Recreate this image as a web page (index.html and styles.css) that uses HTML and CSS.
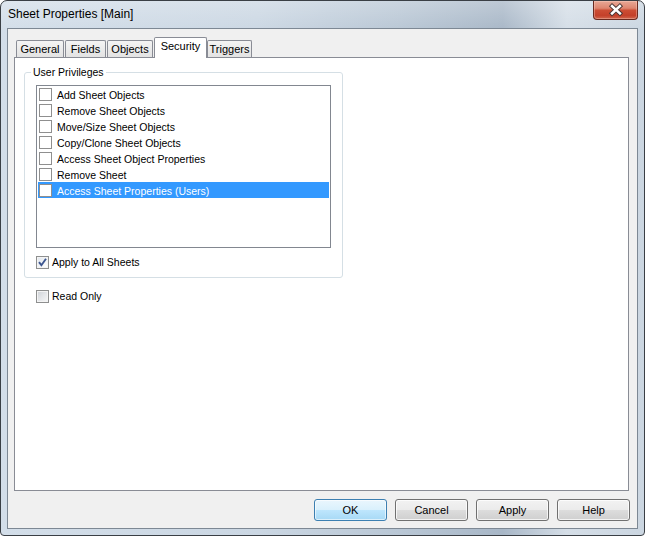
FILE: index.html
```html
<!DOCTYPE html>
<html>
<head>
<meta charset="utf-8">
<title>Sheet Properties [Main]</title>
<link rel="stylesheet" href="styles.css">
</head>
<body>
<div class="window">
  <div class="titlebar">
    <span class="title">Sheet Properties [Main]</span>
    <div class="close">
      <svg width="45" height="19" viewBox="0 0 45 19">
        <path d="M19.5 6 L27.5 13.5 M27.5 6 L19.5 13.5" stroke="#4a3533" stroke-width="4.6" stroke-linecap="square" fill="none"/>
        <path d="M19.5 6 L27.5 13.5 M27.5 6 L19.5 13.5" stroke="#ffffff" stroke-width="2.6" stroke-linecap="square" fill="none"/>
      </svg>
    </div>
  </div>
  <div class="client">
    <div class="tabstrip">
      <div class="tab t-general">General</div>
      <div class="tab t-fields">Fields</div>
      <div class="tab t-objects">Objects</div>
      <div class="tab t-security active">Security</div>
      <div class="tab t-triggers">Triggers</div>
    </div>
    <div class="panel">
      <div class="group">
        <span class="legend">User Privileges</span>
        <div class="list">
          <div class="row"><span class="lbox"></span><span class="rtext">Add Sheet Objects</span></div>
          <div class="row"><span class="lbox"></span><span class="rtext">Remove Sheet Objects</span></div>
          <div class="row"><span class="lbox"></span><span class="rtext">Move/Size Sheet Objects</span></div>
          <div class="row"><span class="lbox"></span><span class="rtext">Copy/Clone Sheet Objects</span></div>
          <div class="row"><span class="lbox"></span><span class="rtext">Access Sheet Object Properties</span></div>
          <div class="row"><span class="lbox"></span><span class="rtext">Remove Sheet</span></div>
          <div class="row selected"><span class="lbox"></span><span class="rtext">Access Sheet Properties (Users)</span></div>
        </div>
        <div class="check apply">
          <span class="cbox checked">
            <svg width="11" height="11" viewBox="0 0 11 11"><path d="M2 5.2 L4.4 8.2 L9 1.8" stroke="#3d5690" stroke-width="1.9" fill="none"/></svg>
          </span>
          <span class="ctext">Apply to All Sheets</span>
        </div>
      </div>
      <div class="check readonly">
        <span class="cbox"></span>
        <span class="ctext">Read Only</span>
      </div>
    </div>
    <div class="buttons">
      <button class="btn default">OK</button>
      <button class="btn">Cancel</button>
      <button class="btn">Apply</button>
      <button class="btn">Help</button>
    </div>
  </div>
</div>
</body>
</html>
```

FILE: styles.css
```css
* { box-sizing: border-box; }
html, body { margin: 0; padding: 0; }
body {
  width: 645px;
  height: 536px;
  overflow: hidden;
  font-family: "Liberation Sans", Arial, sans-serif;
  font-size: 10.5px;
  color: #000;
  background: #ffffff;
}
.window {
  width: 645px;
  height: 536px;
  border: 1px solid #3a3f45;
  border-radius: 7px 7px 4px 4px;
  background:
    linear-gradient(to bottom, rgba(255,255,255,0.25), rgba(255,255,255,0) 30px),
    linear-gradient(to right, #d3dee9 0%, #cbd7e3 40%, #b9c7d5 62%, #a8b7c7 78%, #d5dee7 88%, #cbd6e1 100%);
  display: flex;
  flex-direction: column;
  overflow: hidden;
}
.titlebar {
  height: 27px;
  flex: none;
  display: flex;
  justify-content: space-between;
  align-items: flex-start;
  padding-left: 7px;
}
.title {
  font-size: 12px;
  line-height: 26px;
  color: #000;
}
.close {
  width: 45px;
  height: 19px;
  margin-right: 6px;
  border: 1px solid #6a2a20;
  border-top: none;
  border-radius: 0 0 4px 4px;
  background: linear-gradient(to bottom, #e8a896 0%, #de8670 40%, #cc4d34 52%, #c4402a 80%, #d0664d 100%);
  box-shadow: inset 0 0 0 1px rgba(255, 220, 210, 0.35);
  display: flex;
}
.close svg { display: block; margin: -1px 0 0 -1px; }
.client {
  flex: 1;
  margin: 0 6px 6px 6px;
  border: 1px solid #7d8894;
  background: #f0f0f0;
  display: flex;
  flex-direction: column;
}
.tabstrip {
  height: 29px;
  flex: none;
  display: flex;
  align-items: flex-end;
  padding-left: 8px;
  margin-bottom: -1px;
  position: relative;
  z-index: 1;
}
.tab {
  height: 17px;
  margin-bottom: 1px;
  border: 1px solid #898c95;
  border-bottom: none;
  border-radius: 2px 2px 0 0;
  background: linear-gradient(to bottom, #f4f4f4 0%, #ebebeb 50%, #e3e3e3 100%);
  text-align: center;
  font-size: 11px;
  line-height: 16px;
  color: #000;
}
.t-general { width: 48px; margin-right: 1px; }
.t-fields { width: 41px; margin-right: 1px; }
.t-objects { width: 46px; margin-right: 1px; }
.t-security { width: 53px; }
.t-triggers { width: 45px; }
.tab.active {
  height: 21px;
  margin-bottom: 0;
  background: #ffffff;
  line-height: 17px;
}
.panel {
  height: 434px;
  flex: none;
  margin: 0 8px 0 6px;
  border: 1px solid #898c95;
  background: #ffffff;
  padding-top: 14px;
}
.group {
  position: relative;
  width: 319px;
  margin-left: 9px;
  border: 1px solid #d5dfe5;
  border-radius: 3px;
  padding: 12px 0 8px 11px;
}
.legend {
  position: absolute;
  top: -8px;
  left: 6px;
  padding: 0 2px;
  background: #ffffff;
  line-height: 14px;
}
.list {
  width: 295px;
  height: 163px;
  border: 1px solid #828790;
  padding: 0 1px;
  background: #ffffff;
}
.row {
  height: 16px;
  display: flex;
  align-items: flex-start;
}
.row.selected {
  background: #3399ff;
  color: #ffffff;
}
.lbox {
  width: 13px;
  height: 13px;
  margin: 2px 5px 0 1px;
  border: 1px solid #8f8f8f;
  background: #ffffff;
  flex: none;
}
.rtext { line-height: 16px; padding-top: 1px; }
.check {
  display: flex;
  align-items: center;
  height: 13px;
}
.apply { margin-top: 8px; }
.readonly { margin: 12px 0 0 21px; }
.cbox {
  width: 13px;
  height: 13px;
  border: 1px solid #8e8f8f;
  margin-right: 3px;
  flex: none;
  background: linear-gradient(135deg, #cdd1d6 0%, #e4e6e9 50%, #f7f7f7 100%);
  box-shadow: inset 0 0 0 1px #f4f4f4;
}
.cbox.checked {
  background: linear-gradient(135deg, #e0e6ee 0%, #f4f6f8 60%, #ffffff 100%);
}
.cbox svg { display: block; }
.ctext { line-height: 13px; }
.buttons {
  margin-top: 8px;
  height: 22px;
  display: flex;
  justify-content: flex-end;
  gap: 8px;
  padding-right: 7px;
}
.btn {
  width: 73px;
  height: 22px;
  padding: 0;
  border: 1px solid #707070;
  border-radius: 3px;
  background: linear-gradient(to bottom, #f2f2f2 0%, #ebebeb 50%, #dddddd 51%, #cfcfcf 100%);
  box-shadow: inset 0 0 0 1px rgba(255, 255, 255, 0.75);
  font-family: "Liberation Sans", Arial, sans-serif;
  font-size: 11px;
  color: #000;
  line-height: 20px;
}
.btn.default {
  border-color: #3c7fb1;
  background: linear-gradient(to bottom, #eaf6fd 0%, #d9f0fc 50%, #bee6fd 51%, #a7d9f5 100%);
  box-shadow: inset 0 0 0 1px rgba(255, 255, 255, 0.6);
}
```
